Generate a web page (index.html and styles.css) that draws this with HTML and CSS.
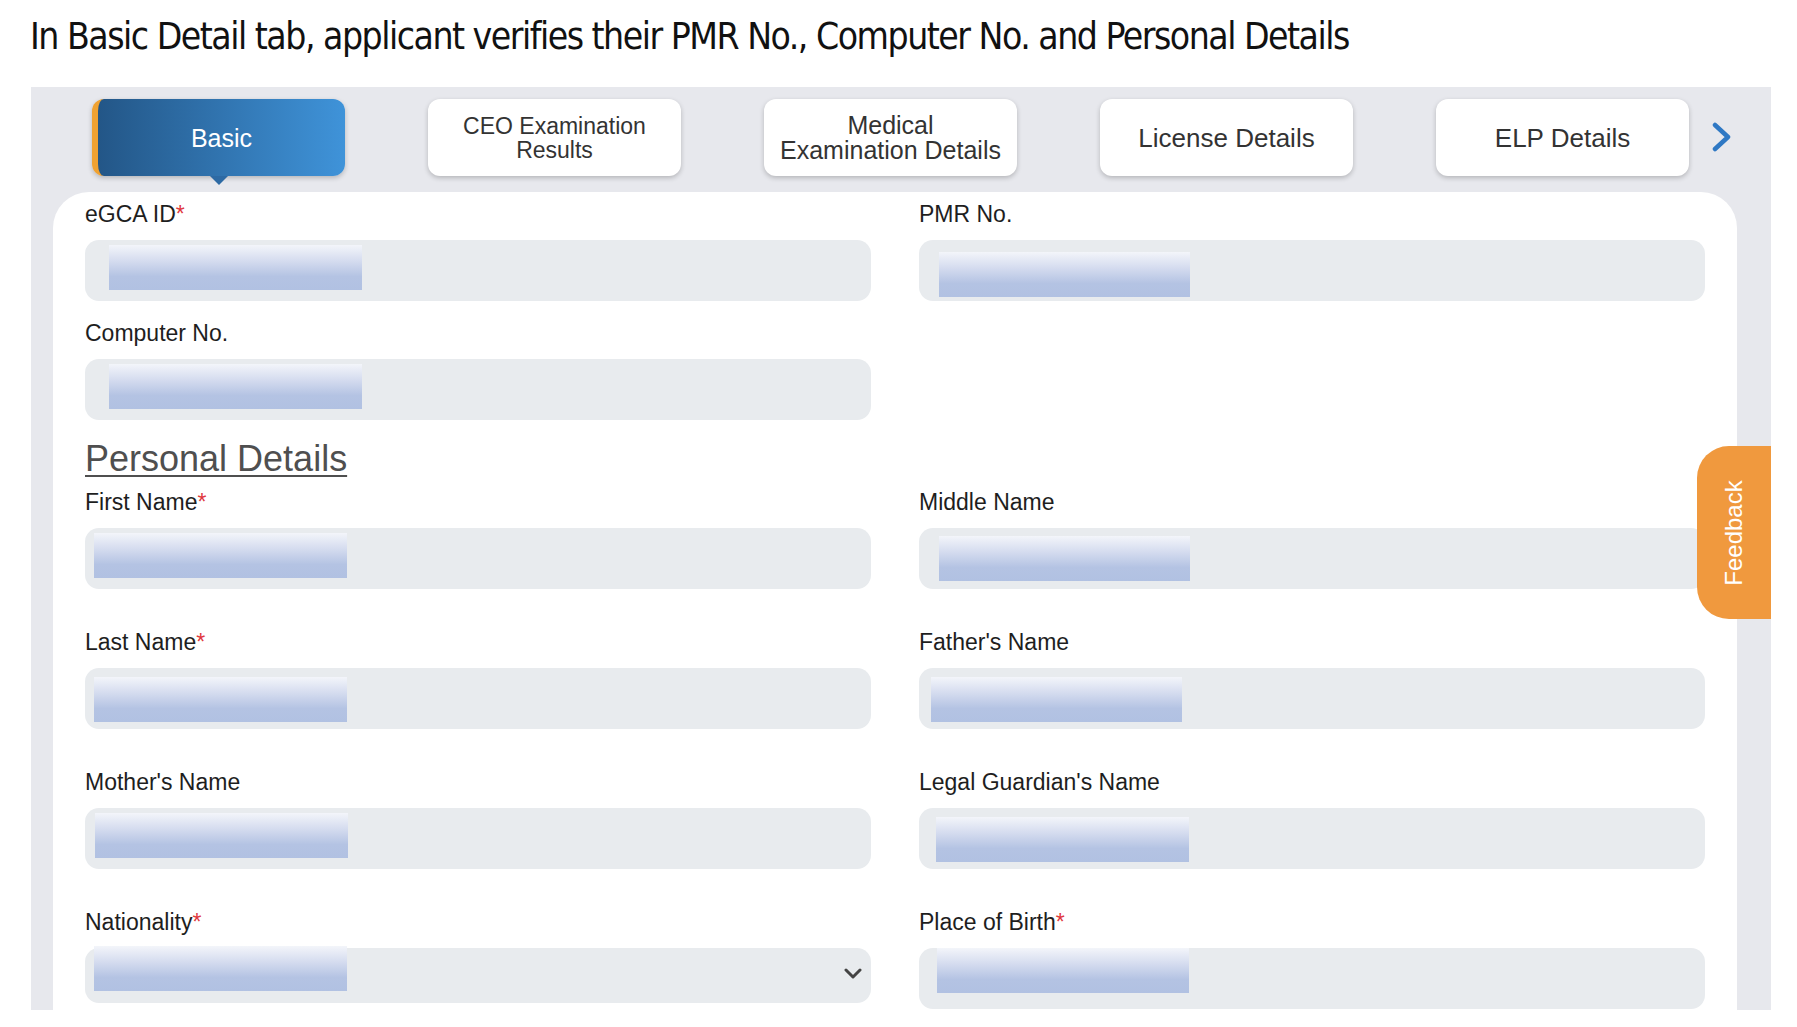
FILE: index.html
```html
<!DOCTYPE html>
<html lang="en">
<head>
<meta charset="utf-8">
<title>Basic Details</title>
<link rel="stylesheet" href="styles.css">
</head>
<body>
<p class="caption">In Basic Detail tab, applicant verifies their PMR No., Computer No. and Personal Details</p>
<div class="panel">
  <div class="tabbar">
    <div class="tab-list">
      <div class="tab active">Basic</div>
      <div class="tab small">CEO Examination<br>Results</div>
      <div class="tab two">Medical<br>Examination Details</div>
      <div class="tab">License Details</div>
      <div class="tab">ELP Details</div>
    </div>
    <svg class="next" width="20" height="30" viewBox="0 0 20 30"><polyline points="3,3 16,15 3,27" fill="none" stroke="#2f78c4" stroke-width="4.5" stroke-linecap="round" stroke-linejoin="round"/></svg>
  </div>
  <div class="card">
    <div class="grid top">
      <div class="field">
        <div class="label">eGCA ID<span class="req">*</span></div>
        <div class="input"><div class="mask o1"></div></div>
      </div>
      <div class="field">
        <div class="label">PMR No.</div>
        <div class="input"><div class="mask o2"></div></div>
      </div>
      <div class="field">
        <div class="label">Computer No.</div>
        <div class="input"><div class="mask o1"></div></div>
      </div>
    </div>
    <h2 class="section">Personal Details</h2>
    <div class="grid personal">
      <div class="field">
        <div class="label">First Name<span class="req">*</span></div>
        <div class="input"><div class="mask o3"></div></div>
      </div>
      <div class="field">
        <div class="label">Middle Name</div>
        <div class="input"><div class="mask o4"></div></div>
      </div>
      <div class="field">
        <div class="label">Last Name<span class="req">*</span></div>
        <div class="input"><div class="mask o5"></div></div>
      </div>
      <div class="field">
        <div class="label">Father's Name</div>
        <div class="input"><div class="mask o6"></div></div>
      </div>
      <div class="field">
        <div class="label">Mother's Name</div>
        <div class="input"><div class="mask o7"></div></div>
      </div>
      <div class="field">
        <div class="label">Legal Guardian's Name</div>
        <div class="input"><div class="mask o8"></div></div>
      </div>
      <div class="field">
        <div class="label">Nationality<span class="req">*</span></div>
        <div class="input select"><div class="mask o9"></div>
          <svg class="caret" width="20" height="11" viewBox="0 0 20 11"><polyline points="3,2 10,9 17,2" fill="none" stroke="#444" stroke-width="3" stroke-linecap="round" stroke-linejoin="round"/></svg>
        </div>
      </div>
      <div class="field">
        <div class="label">Place of Birth<span class="req">*</span></div>
        <div class="input"><div class="mask o10"></div></div>
      </div>
    </div>
  </div>
  <div class="feedback"><span>Feedback</span></div>
</div>
</body>
</html>
```
FILE: styles.css
```css
* { box-sizing: border-box; }
body {
  margin: 0;
  background: #fff;
  font-family: "Liberation Sans", Arial, sans-serif;
  color: #222;
}
.caption {
  margin: 0;
  height: 87px;
  padding: 15px 0 0 30px;
  font-family: "Liberation Sans Narrow", "DejaVu Sans Condensed", "Liberation Sans", sans-serif;
  font-size: 37px;
  letter-spacing: -1.5px;
  color: #111;
  white-space: nowrap;
}
.panel {
  position: relative;
  margin-left: 31px;
  width: 1740px;
  background: #e7e8ed;
  padding-top: 12px;
}
.tabbar {
  display: flex;
  align-items: center;
  padding-left: 61px;
  height: 77px;
}
.tab-list {
  display: flex;
  gap: 83px;
}
.tab {
  position: relative;
  width: 253px;
  height: 77px;
  background: #fff;
  border-radius: 12px;
  box-shadow: 0 2px 5px rgba(0, 0, 0, 0.22);
  display: flex;
  align-items: center;
  justify-content: center;
  text-align: center;
  font-size: 26px;
  line-height: 26px;
  color: #333;
}
.tab.small { font-size: 23px; line-height: 24px; }
.tab.two { font-size: 25px; line-height: 25px; }
.tab.active {
  border-left: 6px solid #f0a232;
  background: linear-gradient(90deg, #235687 0%, #3f93d9 100%);
  color: #fff;
  font-size: 25px;
}
.tab.active::after {
  content: "";
  position: absolute;
  left: 50%;
  bottom: -9px;
  margin-left: -12px;
  border-left: 9px solid transparent;
  border-right: 9px solid transparent;
  border-top: 9px solid #2d6aa4;
}
.next {
  margin-left: 23px;
  margin-top: -2px;
}
.card {
  margin: 16px 0 0 22px;
  width: 1684px;
  background: #fff;
  border-radius: 36px 36px 0 0;
  padding: 10px 32px 1px;
}
.grid {
  display: grid;
  grid-template-columns: 786px 786px;
  column-gap: 48px;
}
.grid.top { row-gap: 20px; }
.grid.personal { row-gap: 41px; }
.field {
  display: flex;
  flex-direction: column;
}
.label {
  height: 24px;
  line-height: 24px;
  font-size: 23px;
  color: #1e1e1e;
  margin-bottom: 14px;
  white-space: nowrap;
}
.req { color: #e0393e; }
.input {
  position: relative;
  height: 61px;
  background: #e8ebee;
  border-radius: 14px;
}
.input.select { height: 55px; }
.mask {
  width: 253px;
  height: 45px;
  background: linear-gradient(180deg, #f3f5fa 0%, #d5dcef 35%, #b4c3e3 70%, #b1c1e2 100%);
}
.o1 { margin: 5px 0 0 24px; }
.o2 { margin: 12px 0 0 20px; width: 251px; }
.o3 { margin: 5px 0 0 9px; }
.o4 { margin: 8px 0 0 20px; width: 251px; }
.o5 { margin: 9px 0 0 9px; }
.o6 { margin: 9px 0 0 12px; width: 251px; }
.o7 { margin: 5px 0 0 10px; }
.o8 { margin: 9px 0 0 17px; }
.o9 { margin: -2px 0 0 9px; }
.o10 { margin: 0 0 0 18px; width: 252px; }
.caret {
  position: absolute;
  right: 8px;
  top: 20px;
}
.section {
  margin: 19px 0 11px;
  height: 40px;
  line-height: 40px;
  font-size: 36px;
  font-weight: normal;
  color: #4f4f4f;
  text-decoration: underline;
  text-decoration-thickness: 2px;
  text-underline-offset: 4px;
}
.feedback {
  position: absolute;
  right: 0;
  top: 359px;
  width: 74px;
  height: 173px;
  background: #f0993e;
  border-radius: 32px 0 0 32px;
  display: flex;
  align-items: center;
  justify-content: center;
}
.feedback span {
  transform: rotate(-90deg);
  color: #fff;
  font-size: 24px;
  white-space: nowrap;
}
```
